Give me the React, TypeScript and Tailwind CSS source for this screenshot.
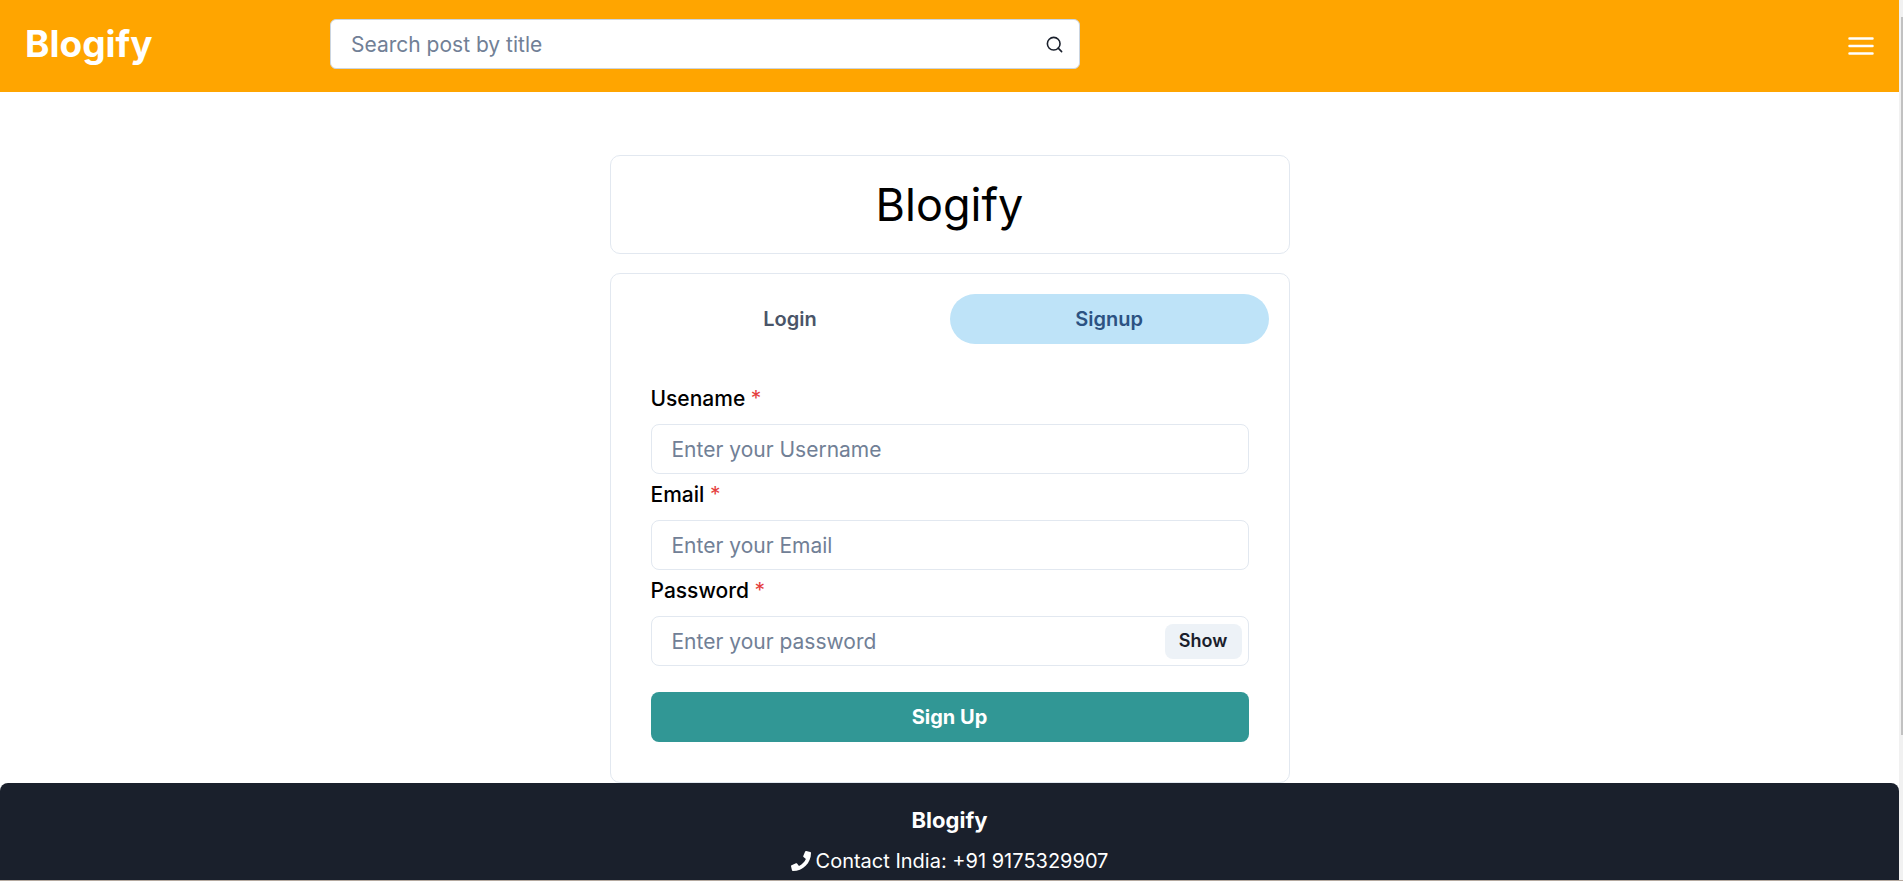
import { useState } from "react";
import type { ReactNode } from "react";
import { FiSearch } from "react-icons/fi";
import { FaPhone } from "react-icons/fa";

const inputClass =
  "h-[50px] w-full rounded-lg border border-[#e2e8f0] bg-white px-5 text-[21px] text-[#1a202c] outline-none placeholder:text-[#718096] focus:border-[#3182ce]";

function Field({ id, label, children }: { id: string; label: string; children: ReactNode }) {
  return (
    <div className="flex flex-col gap-[10px]">
      <label htmlFor={id} className="text-[21px] leading-[30px] font-medium">
        {label} <span className="font-normal text-[#e53e3e]">*</span>
      </label>
      {children}
    </div>
  );
}

function Header() {
  return (
    <header className="flex h-[92px] shrink-0 items-start bg-[#ffa500] px-[25px] pt-[19px]">
      <div className="w-[305px] shrink-0">
        <a href="#" className="text-[37px] leading-[50px] font-bold text-white">
          Blogify
        </a>
      </div>
      <form
        role="search"
        onSubmit={(e) => e.preventDefault()}
        className="flex h-[50px] w-full max-w-[750px] items-center rounded-md border border-[#cbd5e0] bg-white"
      >
        <input
          type="text"
          aria-label="Search post by title"
          placeholder="Search post by title"
          className="h-full min-w-0 flex-1 bg-transparent pl-5 text-[21px] text-[#1a202c] outline-none placeholder:text-[#718096]"
        />
        <button type="submit" aria-label="Search" className="flex w-[50px] items-center justify-center text-[#1a202c]">
          <FiSearch size={19} />
        </button>
      </form>
      <button type="button" aria-label="Open menu" className="mt-2 ml-auto flex h-[38px] items-center">
        <svg width="26" height="20" viewBox="0 0 26 20" fill="none" stroke="white" strokeWidth="2.5" strokeLinecap="round" aria-hidden="true">
          <path d="M1.5 2.5h23M1.5 10h23M1.5 17.5h23" />
        </svg>
      </button>
    </header>
  );
}

export default function App() {
  const [tab, setTab] = useState("signup");
  const [visible, setVisible] = useState(false);
  const tabClass = (name: string) =>
    tab === name
      ? "h-[50px] flex-1 rounded-full bg-[#bee3f8] text-xl font-semibold text-[#2c5282]"
      : "h-[50px] flex-1 rounded-full text-xl font-semibold text-[#4a5568]";

  return (
    <div className="flex h-screen overflow-hidden border-b border-[#b5aaa0] bg-white font-['Inter',sans-serif] text-black">
      <div className="flex min-w-0 flex-1 flex-col">
        <Header />
        <main className="mx-auto mt-[63px] w-full max-w-[680px] shrink-0">
          <div className="flex h-[99px] items-center justify-center rounded-[10px] border border-[#e2e8f0]">
            <h1 className="text-[45px] leading-[68px]">Blogify</h1>
          </div>
          <section className="mt-[19px] rounded-[10px] border border-[#e2e8f0] px-5 pt-5 pb-10">
            <div role="tablist" className="flex">
              <button type="button" role="tab" aria-selected={tab === "login"} onClick={() => setTab("login")} className={tabClass("login")}>
                Login
              </button>
              <button type="button" role="tab" aria-selected={tab === "signup"} onClick={() => setTab("signup")} className={tabClass("signup")}>
                Signup
              </button>
            </div>
            <form onSubmit={(e) => e.preventDefault()} className="mt-10 flex flex-col gap-[6px] px-5">
              {tab === "signup" && (
                <Field id="username" label="Usename">
                  <input id="username" type="text" placeholder="Enter your Username" className={inputClass} />
                </Field>
              )}
              <Field id="email" label="Email">
                <input id="email" type="email" placeholder="Enter your Email" className={inputClass} />
              </Field>
              <Field id="password" label="Password">
                <div className="flex h-[50px] items-center rounded-lg border border-[#e2e8f0] pr-[6px]">
                  <input
                    id="password"
                    type={visible ? "text" : "password"}
                    placeholder="Enter your password"
                    className="h-full min-w-0 flex-1 bg-transparent pl-5 text-[21px] text-[#1a202c] outline-none placeholder:text-[#718096]"
                  />
                  <button
                    type="button"
                    onClick={() => setVisible(!visible)}
                    className="h-[35px] w-[77px] rounded-lg bg-[#edf2f7] text-lg font-semibold text-[#1a202c]"
                  >
                    {visible ? "Hide" : "Show"}
                  </button>
                </div>
              </Field>
              <button type="submit" className="mt-5 h-[50px] rounded-lg bg-[#319795] text-xl font-bold text-white">
                {tab === "signup" ? "Sign Up" : "Login"}
              </button>
            </form>
          </section>
        </main>
        <footer className="flex flex-1 flex-col items-center rounded-t-lg bg-[#1a202c] pt-[19px] text-white">
          <p className="text-[22px] leading-9 font-bold">Blogify</p>
          <p className="mt-2 flex items-center gap-[5px] text-xl leading-[30px]">
            <FaPhone size={20} aria-hidden="true" />
            Contact India: +91 9175329907
          </p>
        </footer>
      </div>
      <div aria-hidden="true" className="flex w-1 justify-end bg-[#f1f1f1] pt-[17px]">
        <div className="h-[718px] w-[2px] bg-[#c1c1c1]" />
      </div>
    </div>
  );
}
